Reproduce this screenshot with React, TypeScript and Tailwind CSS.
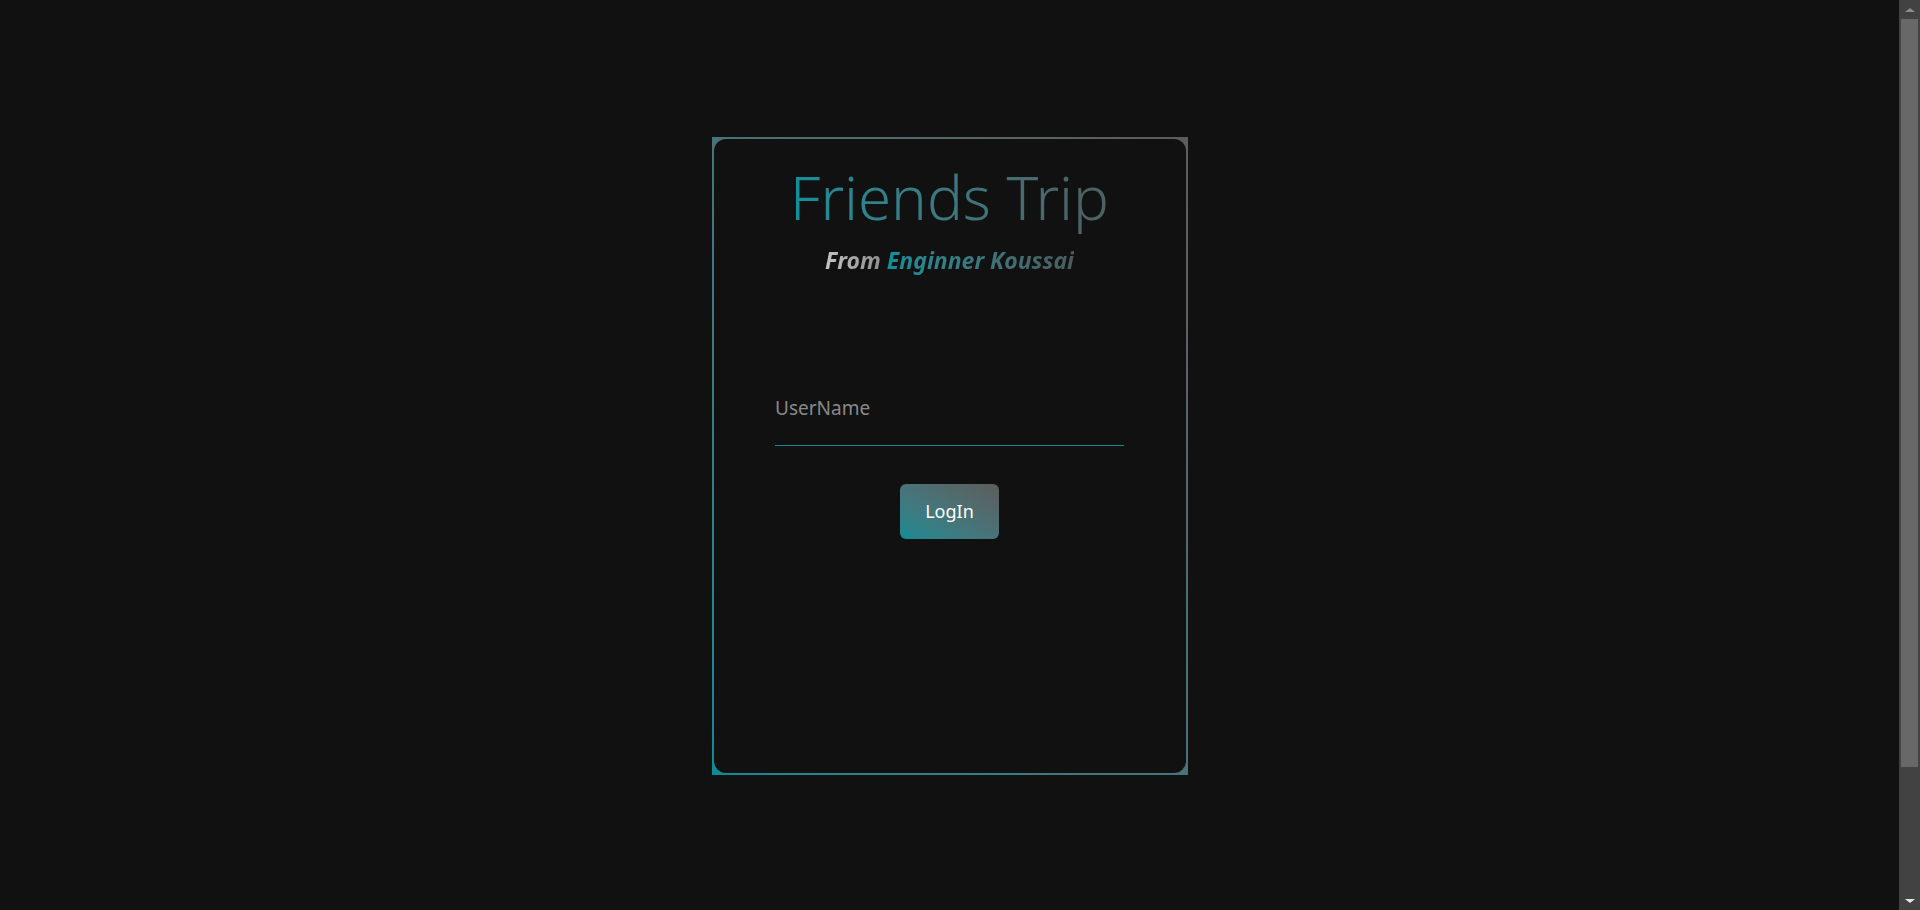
function ScrollBar() {
  return (
    <div className="flex h-full w-[21px] shrink-0 flex-col items-center bg-[#424242]">
      <div className="flex h-[19px] w-full items-center justify-center">
        <div className="h-0 w-0 border-x-[5px] border-b-[4px] border-x-transparent border-b-[#8c8c8c]" />
      </div>
      <div className="h-[748px] w-[17px] bg-[#686868]" />
      <div className="flex-1" />
      <div className="flex h-[19px] w-full items-center justify-center">
        <div className="h-0 w-0 border-x-[5px] border-t-[4px] border-x-transparent border-t-[#e6e6e6]" />
      </div>
    </div>
  );
}

export default function App() {
  return (
    <div
      className="flex h-screen overflow-hidden bg-[#111111]"
      style={{ fontFamily: '"Noto Sans", "Open Sans", sans-serif' }}
    >
      <main className="flex-1 pt-[137px]">
        <div className="mx-auto h-[638px] w-[476px] bg-linear-to-tr from-[#0e8a94] to-[#5c5c5c] p-[2px]">
          <div className="flex h-full flex-col items-center rounded-[12px] bg-[#111111]">
            <h1 className="mt-[18px] bg-linear-to-r from-[#0f8f9a] to-[#4d5f62] bg-clip-text text-[60px] leading-[80px] font-light text-transparent">
              Friends Trip
            </h1>
            <p className="mt-[8px] text-[23px] leading-[30px] font-bold italic">
              <span className="bg-linear-to-r from-[#c4c4c4] to-[#8a8a8a] bg-clip-text text-transparent">
                From{" "}
              </span>
              <span className="bg-linear-to-r from-[#0f8f9a] to-[#4a5c5f] bg-clip-text text-transparent">
                Enginner Koussai
              </span>
            </p>
            <input
              type="text"
              placeholder="UserName"
              className="mt-[109px] h-[62px] w-[349px] border-b border-[#138a94] bg-transparent pb-[14px] text-[19px] text-[#cccccc] outline-none placeholder:text-[#8a8a8a]"
            />
            <button className="mt-[38px] h-[55px] w-[99px] rounded-[6px] bg-linear-to-tr from-[#0e8a94] to-[#5c5c5c] text-[18px] text-white">
              LogIn
            </button>
          </div>
        </div>
      </main>
      <ScrollBar />
    </div>
  );
}
